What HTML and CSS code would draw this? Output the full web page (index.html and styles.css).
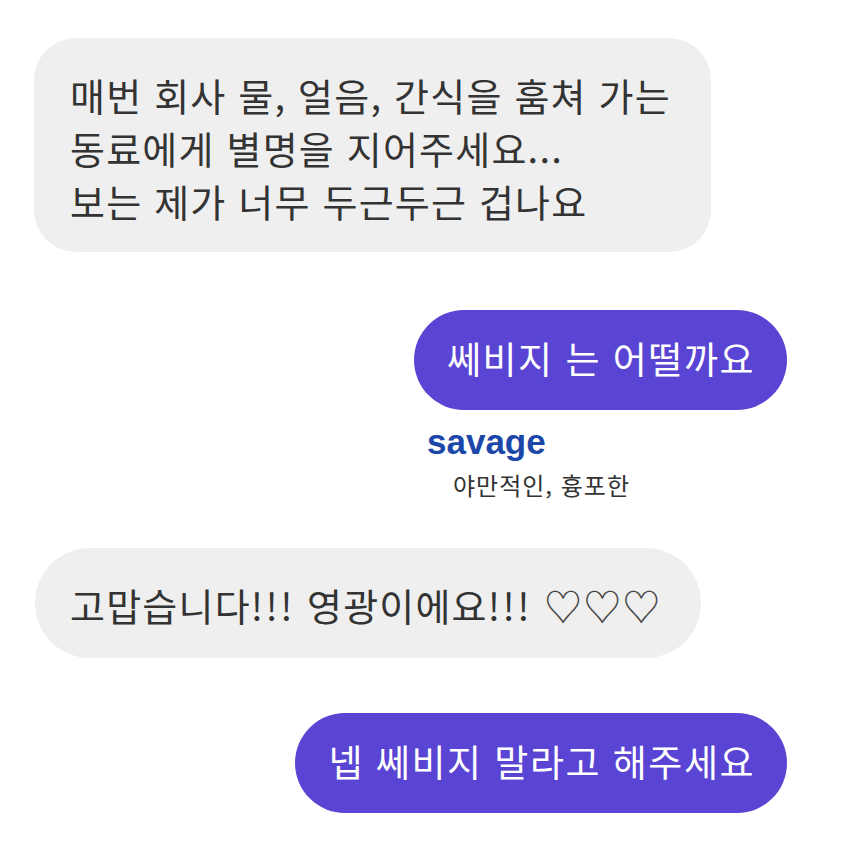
FILE: index.html
```html
<!DOCTYPE html>
<html lang="ko">
<head>
  <meta charset="UTF-8" />
  <meta name="viewport" content="width=device-width, initial-scale=1.0"/>
  <title>Chat</title>
  <link rel="stylesheet" href="styles.css">
</head>
<body>
  <div class="chat">
    <div class="bubble bubble-in bubble-multi">
      매번 회사 물, 얼음, 간식을 훔쳐 가는<br>
      동료에게 별명을 지어주세요...<br>
      보는 제가 너무 두근두근 겁나요
    </div>

    <div class="bubble bubble-out bubble-first">쎄비지 는 어떨까요</div>

    <div class="dict-card">
      <div class="dict-word">savage</div>
      <div class="dict-meaning">야만적인, 흉포한</div>
    </div>

    <div class="bubble bubble-in bubble-thanks">고맙습니다<span class="bang">!!!</span> 영광이에요<span class="bang">!!!</span> <span class="hearts">♡♡♡</span></div>

    <div class="bubble bubble-out bubble-last">넵 쎄비지 말라고 해주세요</div>
  </div>
</body>
</html>
```

FILE: styles.css
```css
:root {
  --page-bg: #ffffff;
  --bubble-in: #efefef;
  --bubble-out: #5944d4;
  --text-dark: #333333;
  --text-light: #ffffff;
  --dict-blue: #1b47a8;
}

* {
  margin: 0;
  padding: 0;
  box-sizing: border-box;
}

body {
  background: var(--page-bg);
  font-family: "Noto Sans CJK KR", "Noto Sans", sans-serif;
  color: var(--text-dark);
}

.chat {
  display: flex;
  flex-direction: column;
  padding: 38px 67px 0 34px;
}

.bubble {
  font-size: 38px;
  line-height: 53px;
  letter-spacing: 1.2px;
  white-space: nowrap;
}

.bubble-in {
  align-self: flex-start;
  background: var(--bubble-in);
  color: var(--text-dark);
}

.bubble-out {
  align-self: flex-end;
  background: var(--bubble-out);
  color: var(--text-light);
  font-size: 37px;
  letter-spacing: 1.5px;
  border-radius: 50px;
  padding: 22px 32px 25px 33px;
}

.bubble-multi {
  border-radius: 42px;
  padding: 30px 40px 25px 36px;
}

.bubble-first {
  margin-top: 58px;
}

.dict-card {
  align-self: flex-end;
  width: 375px;
  padding-left: 15px;
  margin-top: 15px;
}

.dict-word {
  font-family: "Liberation Sans", Arial, sans-serif;
  font-weight: 700;
  font-size: 35px;
  line-height: 33px;
  color: var(--dict-blue);
}

.dict-meaning {
  font-size: 24px;
  line-height: 30px;
  letter-spacing: 1px;
  margin-top: 12px;
  padding-left: 26px;
  color: var(--text-dark);
}

.bubble-thanks {
  margin-top: 48px;
  margin-left: 1px;
  border-radius: 55px;
  padding: 30px 39px 27px 35px;
}

.bang {
  letter-spacing: 2.5px;
}

.hearts {
  color: #444;
}

.bubble-last {
  margin-top: 55px;
}
```
